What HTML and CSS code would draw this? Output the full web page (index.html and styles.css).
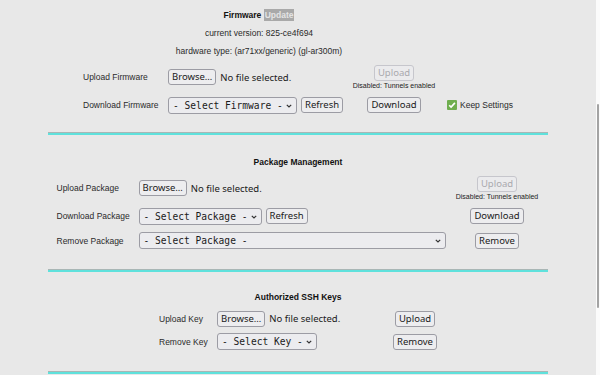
FILE: index.html
```html
<!DOCTYPE html>
<html lang="en">
<head>
    <meta charset="UTF-8">
    <meta name="viewport" content="width=device-width, initial-scale=1.0">
    <title>Firmware Update</title>
    <link rel="stylesheet" href="styles.css">
</head>
<body>
    <div class="page">
        <main class="content">
            <section class="section section-fw">
                <div class="intro">
                    <h2 class="title">Firmware <span class="hl">Update</span></h2>
                    <p class="meta">current version: 825-ce4f694</p>
                    <p class="meta">hardware type: (ar71xx/generic) (gl-ar300m)</p>
                </div>
                <div class="grid grid-fw">
                    <div class="label">Upload Firmware</div>
                    <div class="field">
                        <button class="btn">Browse…</button>
                        <span class="file-note">No file selected.</span>
                    </div>
                    <div class="action">
                        <button class="btn" disabled>Upload</button>
                        <span class="note">Disabled: Tunnels enabled</span>
                    </div>
                    <div></div>

                    <div class="label">Download Firmware</div>
                    <div class="field">
                        <span class="select-wrap w-fw">
                            <select><option>- Select Firmware -</option></select>
                            <svg class="chev" width="6" height="4" viewBox="0 0 6 4"><path d="M0.8 0.8l2.2 2.2 2.2-2.2" fill="none" stroke="#333" stroke-width="1.2"/></svg>
                        </span>
                        <button class="btn">Refresh</button>
                    </div>
                    <div class="action">
                        <button class="btn">Download</button>
                    </div>
                    <div class="check">
                        <span class="box">
                            <svg width="10" height="10" viewBox="0 0 10 10"><path d="M2.2 5.2l1.9 1.9 3.8-4.2" fill="none" stroke="#fff" stroke-width="1.6"/></svg>
                        </span>
                        Keep Settings
                    </div>
                </div>
            </section>

            <hr class="rule">

            <section class="section section-pkg">
                <h2 class="title">Package Management</h2>
                <div class="grid grid-pkg">
                    <div class="label">Upload Package</div>
                    <div class="field">
                        <button class="btn">Browse…</button>
                        <span class="file-note">No file selected.</span>
                    </div>
                    <div class="action">
                        <button class="btn" disabled>Upload</button>
                        <span class="note">Disabled: Tunnels enabled</span>
                    </div>

                    <div class="label">Download Package</div>
                    <div class="field">
                        <span class="select-wrap w-pkg">
                            <select><option>- Select Package -</option></select>
                            <svg class="chev" width="6" height="4" viewBox="0 0 6 4"><path d="M0.8 0.8l2.2 2.2 2.2-2.2" fill="none" stroke="#333" stroke-width="1.2"/></svg>
                        </span>
                        <button class="btn">Refresh</button>
                    </div>
                    <div class="action">
                        <button class="btn">Download</button>
                    </div>

                    <div class="label">Remove Package</div>
                    <div class="field">
                        <span class="select-wrap w-rm">
                            <select><option>- Select Package -</option></select>
                            <svg class="chev" width="6" height="4" viewBox="0 0 6 4"><path d="M0.8 0.8l2.2 2.2 2.2-2.2" fill="none" stroke="#333" stroke-width="1.2"/></svg>
                        </span>
                    </div>
                    <div class="action">
                        <button class="btn">Remove</button>
                    </div>
                </div>
            </section>

            <hr class="rule">

            <section class="section section-ssh">
                <h2 class="title">Authorized SSH Keys</h2>
                <div class="grid grid-ssh">
                    <div class="label">Upload Key</div>
                    <div class="field">
                        <button class="btn">Browse…</button>
                        <span class="file-note">No file selected.</span>
                    </div>
                    <div class="action">
                        <button class="btn">Upload</button>
                    </div>

                    <div class="label">Remove Key</div>
                    <div class="field">
                        <span class="select-wrap w-key">
                            <select><option>- Select Key -</option></select>
                            <svg class="chev" width="6" height="4" viewBox="0 0 6 4"><path d="M0.8 0.8l2.2 2.2 2.2-2.2" fill="none" stroke="#333" stroke-width="1.2"/></svg>
                        </span>
                    </div>
                    <div class="action">
                        <button class="btn">Remove</button>
                    </div>
                </div>
            </section>

            <hr class="rule">
        </main>
        <div class="scrollbar"><div class="thumb"></div></div>
    </div>
</body>
</html>
```

FILE: styles.css
```css
html, body {
    margin: 0;
    padding: 0;
    height: 375px;
    overflow: hidden;
    background-color: #fff;
}

body {
    font-family: "Liberation Sans", Arial, sans-serif;
    font-size: 8.5px;
    color: #2a2a2a;
}

.page {
    display: flex;
    height: 375px;
}

.content {
    width: 596px;
    flex: none;
    background-color: #e8e8e8;
}

.scrollbar {
    width: 4px;
    background-color: #fbfbfb;
}

.thumb {
    width: 2px;
    height: 204px;
    margin: 104px 0 0 1px;
    background-color: #a3a3a3;
    border-radius: 1px;
}

/* sections */
.section-fw {
    padding: 6px 0 13px;
}

.section-pkg {
    padding: 18px 0 18px;
}

.section-ssh {
    padding: 16px 0 18px;
}

.title {
    margin: 0;
    font-size: 8.5px;
    font-weight: bold;
    line-height: 18px;
    text-align: center;
    color: #111;
}

.intro {
    padding-right: 78px;
}

.hl {
    background-color: #a9a9a9;
    color: #e4e4e4;
    padding: 1px 1px;
}

.meta {
    margin: 0;
    line-height: 18px;
    text-align: center;
}

.rule {
    width: 84%;
    height: 0;
    margin: 0 auto;
    border: none;
    border-top: 1px solid #a9b6b5;
    border-bottom: 2px solid #5fe1dc;
}

/* form grids */
.grid {
    display: grid;
    margin: 0 auto;
    align-items: center;
}

.grid-fw {
    width: 430px;
    margin-top: 3px;
    grid-template-columns: 85px 184px 84px 77px;
    grid-template-rows: 28px 28px;
}

.grid-pkg {
    width: 483px;
    margin-top: 3px;
    grid-template-columns: 82px 316px 85px;
    grid-template-rows: 28px 28px 21px;
}

.grid-ssh {
    width: 278px;
    margin-top: 1px;
    grid-template-columns: 58px 176px 44px;
    grid-template-rows: 23px 23px;
}

.label {
    white-space: nowrap;
}

.field {
    display: flex;
    align-items: center;
    gap: 4px;
}

.action {
    display: flex;
    flex-direction: column;
    align-items: center;
}

.note {
    font-size: 7px;
    line-height: 9px;
    white-space: nowrap;
    color: #222;
}

.file-note {
    font-family: "Noto Sans", sans-serif;
    font-size: 9.5px;
    color: #1a1a1a;
    white-space: nowrap;
}

.btn {
    height: 16px;
    padding: 0 3px;
    font-family: "Noto Sans", sans-serif;
    font-size: 9.5px;
    line-height: 14px;
    color: #1a1a1a;
    background-color: #ededef;
    border: 1px solid #9c9ca4;
    border-radius: 3px;
    white-space: nowrap;
}

.btn:disabled {
    color: #a9a9ad;
    border-color: #c6c6cc;
    background-color: #ebebed;
}

.select-wrap {
    position: relative;
    display: inline-flex;
}

.select-wrap select {
    width: 100%;
    height: 17px;
    padding: 0 4px;
    -webkit-appearance: none;
    appearance: none;
    font-family: "DejaVu Sans Mono", monospace;
    font-size: 9.6px;
    color: #1a1a1a;
    background-color: #ececef;
    border: 1px solid #9c9ca4;
    border-radius: 3px;
}

.chev {
    position: absolute;
    right: 5px;
    top: 7px;
    pointer-events: none;
}

.w-fw { width: 129px; }
.w-pkg { width: 123px; }
.w-rm { width: 307px; }
.w-key { width: 100px; }

.check {
    display: flex;
    align-items: center;
    gap: 3px;
    padding-left: 11px;
    white-space: nowrap;
    font-size: 8.5px;
}

.box {
    display: inline-flex;
    width: 10px;
    height: 10px;
    background-color: #6fae4f;
    border-radius: 1px;
}
```
